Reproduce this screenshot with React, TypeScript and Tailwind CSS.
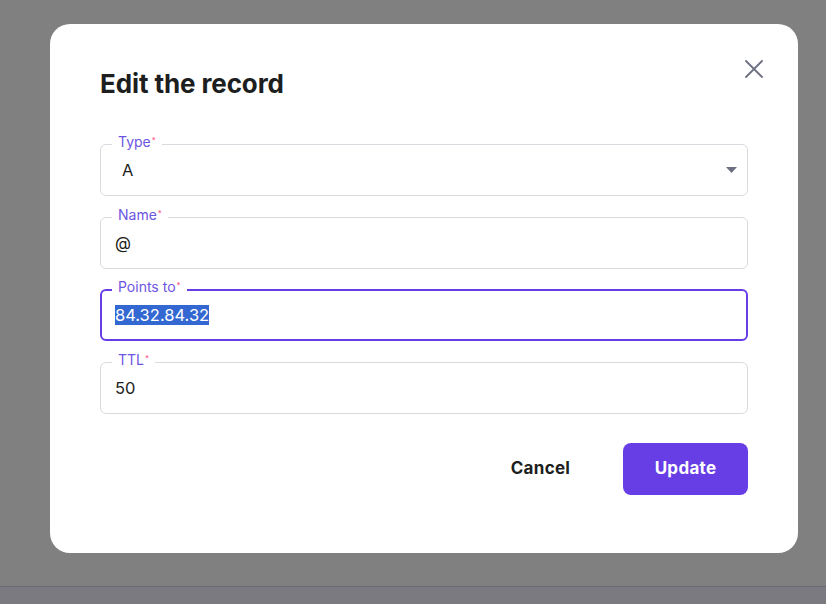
import React from 'react';

type FieldProps = {
  label: string;
  value: React.ReactNode;
  focused?: boolean;
  select?: boolean;
};

function Field({ label, value, focused, select }: FieldProps) {
  return (
    <div
      className={
        'relative h-[52px] rounded-[6px] bg-white flex items-center ' +
        (focused ? 'border-2 border-[#673de6] pl-[13px]' : 'border border-[#d8dae0] pl-[14px]')
      }
    >
      <span
        className={
          'absolute bg-white px-[6px] text-[14px] leading-[16px] text-[#6c55e2] ' +
          (focused ? 'left-[10px] -top-[12px]' : 'left-[11px] -top-[11px]')
        }
      >
        {label}
        <sup className="ml-[1px] text-[8px] text-[#fc5185] relative -top-[4px]">*</sup>
      </span>
      <div className={'flex-1 text-[16.5px] leading-[20px] text-[#1d1e20] ' + (select ? 'pl-[7px]' : '')}>
        {value}
      </div>
      {select && (
        <svg width="11" height="6" viewBox="0 0 11 6" className="mr-[10px]">
          <path d="M0 0 L11 0 L5.5 6 Z" fill="#6d7081" />
        </svg>
      )}
    </div>
  );
}

export default function App() {
  return (
    <div className="w-[826px] h-[604px] flex flex-col font-['Inter',sans-serif] overflow-hidden">
      <div className="h-[586px] bg-[#808080] pt-[24px] pl-[50px]">
        <div className="relative w-[748px] h-[529px] bg-white rounded-[20px] px-[50px] pt-[43px]">
          <button className="absolute right-[35px] top-[36px] w-[18px] h-[18px]">
            <svg width="18" height="18" viewBox="0 0 18 18">
              <path d="M1 1 L17 17 M17 1 L1 17" stroke="#6d7081" strokeWidth="1.8" strokeLinecap="round" />
            </svg>
          </button>
          <h2 className="text-[26px] leading-[34px] font-bold text-[#1d1e20] tracking-[-0.1px]">Edit the record</h2>
          <div className="mt-[43px] flex flex-col gap-[20.5px]">
            <Field label="Type" value="A" select />
            <Field label="Name" value="@" />
            <Field
              label="Points to"
              focused
              value={<span className="bg-[#3367d1] text-white">84.32.84.32</span>}
            />
            <Field label="TTL" value="50" />
          </div>
          <div className="mt-[29px] flex justify-end gap-[20px]">
            <button className="w-[125px] h-[52px] rounded-[8px] text-[17px] font-bold tracking-[0.3px] text-[#1d1e20]">
              Cancel
            </button>
            <button className="w-[125px] h-[52px] rounded-[8px] bg-[#673de6] text-[17px] font-bold tracking-[0.3px] text-white">
              Update
            </button>
          </div>
        </div>
      </div>
      <div className="h-[18px] bg-[#7b7a80] border-t border-[#6b6a70]" />
    </div>
  );
}
